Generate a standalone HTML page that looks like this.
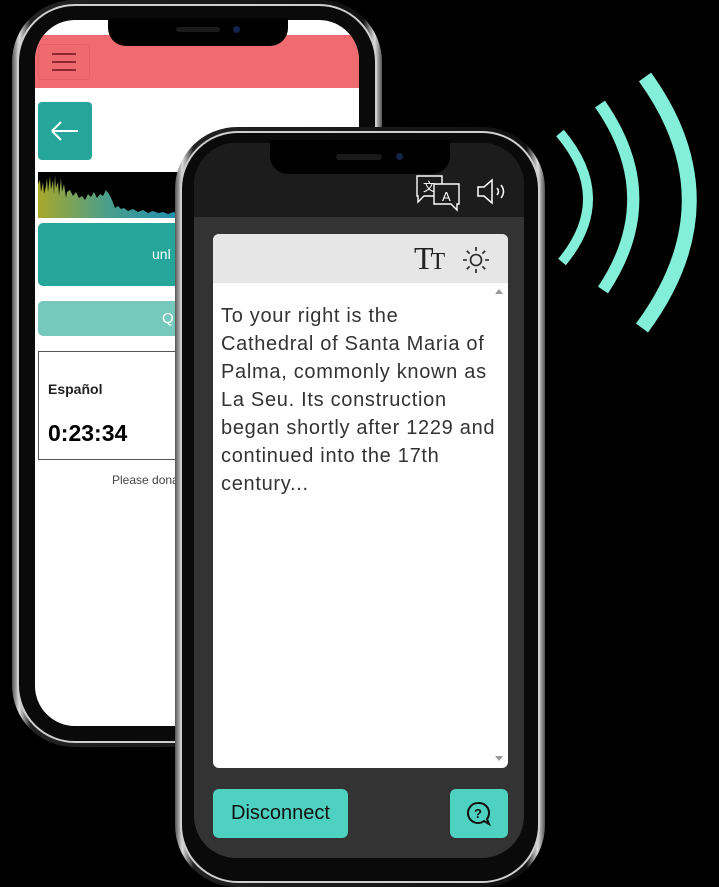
<!DOCTYPE html>
<html><head><meta charset="utf-8"><style>
*{margin:0;padding:0;box-sizing:border-box}
body{width:719px;height:875px;background:#000;position:relative;overflow:hidden;font-family:"Liberation Sans",sans-serif}
.abs{position:absolute}
.frame{position:absolute;border-radius:62px;background:linear-gradient(90deg,#555,#ddd 2%,#222 5%,#111 95%,#ddd 98%,#555);}
.ring{position:absolute;border-radius:58px;background:#0a0a0a;border:2px solid #cfcfcf}
</style></head><body>

<!-- back phone -->
<div class="frame" style="left:12px;top:0;width:370px;height:747px"></div>
<div class="ring" style="left:17px;top:4px;width:360px;height:739px"></div>
<div class="abs" style="left:35px;top:20px;width:324px;height:706px;background:#fff;border-radius:40px;overflow:hidden">
  <div class="abs" style="left:0;top:15px;width:324px;height:53px;background:#ef6b70"></div>
  <div class="abs" style="left:3px;top:24px;width:52px;height:36px;border:1px solid #e06064;border-radius:4px;background:#ee6a6e"></div>
  <div class="abs" style="left:17px;top:33px;width:24px;height:2px;background:#8a2a2e"></div>
  <div class="abs" style="left:17px;top:41px;width:24px;height:2px;background:#8a2a2e"></div>
  <div class="abs" style="left:17px;top:49px;width:24px;height:2px;background:#8a2a2e"></div>
  <div class="abs" style="left:3px;top:82px;width:54px;height:58px;background:#26a69a;border-radius:4px"></div>
  <svg class="abs" style="left:15px;top:100px" width="30" height="22"><path d="M2 11H28M2 11L11 2M2 11L11 20" stroke="#fff" stroke-width="2" fill="none"/></svg>
  <svg class="abs" style="left:3px;top:152px" width="140" height="46">
    <defs><linearGradient id="wg" x1="0" x2="1"><stop offset="0" stop-color="#a8a82a"/><stop offset=".5" stop-color="#4a9e8c"/><stop offset="1" stop-color="#1e8fb0"/></linearGradient></defs>
    <rect width="140" height="46" fill="#000"/>
    <path d="M0 46V12L2 8L3 20L5 10L6 22L8 14L9 6L10 20L12 4L13 18L15 8L16 22L17 3L18 16L20 10L21 24L23 6L24 20L26 12L28 26L29 20L32 18L35 24L38 20L41 26L44 24L47 28L50 22L53 25L56 20L59 26L62 22L65 24L68 18L71 22L74 28L77 36L80 34L83 37L86 36L90 39L95 37L100 40L105 38L110 41L115 39L120 41L125 40L130 42L135 40L140 42V46Z" fill="url(#wg)"/>
  </svg>
  <div class="abs" style="left:3px;top:203px;width:321px;height:63px;background:#26a69a;border-radius:5px;color:#fff;font-size:14px;line-height:63px;padding-left:114px">unl</div>
  <div class="abs" style="left:3px;top:281px;width:321px;height:35px;background:#76c8bd;border-radius:5px;color:#fff;font-size:15px;line-height:35px;padding-left:124px">Q</div>
  <div class="abs" style="left:3px;top:331px;width:321px;height:109px;border:1px solid #555"></div>
  <div class="abs" style="left:13px;top:361px;font-size:14px;font-weight:bold;color:#222">Español</div>
  <div class="abs" style="left:13px;top:400px;font-size:23px;font-weight:bold;color:#000">0:23:34</div>
  <div class="abs" style="left:77px;top:453px;font-size:12px;color:#444">Please donate</div>
</div>
<div class="abs" style="left:108px;top:18px;width:180px;height:28px;background:#000;border-radius:0 0 18px 18px"></div>
<div class="abs" style="left:176px;top:27px;width:44px;height:5px;background:#1a1a1a;border-radius:3px"></div>
<div class="abs" style="left:233px;top:26px;width:7px;height:7px;background:#13234a;border-radius:50%"></div>

<!-- waves -->
<svg class="abs" style="left:0;top:0" width="719" height="875">
<g fill="none" stroke="#83efd8" stroke-linecap="butt">
<path d="M560 133Q615 198 562 262" stroke-width="10"/>
<path d="M600 104Q665 197 603 290" stroke-width="12"/>
<path d="M645 77Q735 202 642 328" stroke-width="15"/>
</g></svg>

<!-- front phone -->
<div class="frame" style="left:175px;top:127px;width:370px;height:760px"></div>
<div class="ring" style="left:180px;top:131px;width:360px;height:752px"></div>
<div class="abs" style="left:194px;top:143px;width:330px;height:715px;background:#333;border-radius:42px;overflow:hidden">
  <div class="abs" style="left:0;top:0;width:330px;height:74px;background:#1c1c1c"></div>
</div>
<div class="abs" style="left:270px;top:140px;width:180px;height:34px;background:#000;border-radius:0 0 18px 18px"></div>
<div class="abs" style="left:336px;top:154px;width:46px;height:6px;background:#1a1a1a;border-radius:3px"></div>
<div class="abs" style="left:396px;top:153px;width:7px;height:7px;background:#13234a;border-radius:50%"></div>
<!-- top icons -->
<svg class="abs" style="left:415px;top:174px" width="46" height="38" fill="none" stroke="#fff" stroke-width="1.4">
<path d="M2 2H27V22H9L3 28V22H2Z"/>
<path d="M19 10H44V30H42V36L36 30H19Z" fill="#1c1c1c"/>
<text x="8" y="17" fill="#fff" stroke="none" font-size="12" font-family="Noto Sans CJK SC,sans-serif">文</text>
<text x="27" y="27" fill="#fff" stroke="none" font-size="13" font-family="Liberation Sans,sans-serif">A</text>
</svg>
<svg class="abs" style="left:476px;top:178px" width="32" height="28" fill="none" stroke="#fff" stroke-width="1.5">
<path d="M2 9H8L16 2V25L8 18H2Z"/><path d="M21 10Q24 13.5 21 17"/><path d="M25 7Q30 13.5 25 20"/>
</svg>
<!-- card -->
<div class="abs" style="left:213px;top:234px;width:295px;height:534px;background:#fff;border-radius:6px;overflow:hidden">
  <div class="abs" style="left:0;top:0;width:295px;height:49px;background:#e6e6e6"></div>
  <div class="abs" style="left:201px;top:6px;font-family:'Liberation Serif',serif;font-size:32px;color:#222">T<span style="font-size:24px;margin-left:-3px">T</span></div>
  <svg class="abs" style="left:248px;top:11px" width="30" height="30" stroke="#222" stroke-width="1.6" fill="none">
  <circle cx="15" cy="15" r="5.5"/><path d="M15 2V6M15 24V28M2 15H6M24 15H28M5.8 5.8L8.6 8.6M21.4 21.4L24.2 24.2M5.8 24.2L8.6 21.4M21.4 8.6L24.2 5.8"/></svg>
  <div class="abs" style="left:282px;top:55px;width:0;height:0;border-left:4px solid transparent;border-right:4px solid transparent;border-bottom:5px solid #999"></div>
  <div class="abs" style="left:282px;top:522px;width:0;height:0;border-left:4px solid transparent;border-right:4px solid transparent;border-top:5px solid #999"></div>
  <div class="abs" style="left:8px;top:68px;width:290px;font-size:20px;line-height:28px;color:#333;letter-spacing:.7px;white-space:nowrap">To your right is the<br>Cathedral of Santa Maria of<br>Palma, commonly known as<br>La Seu. Its construction<br>began shortly after 1229 and<br>continued into the 17th<br>century...</div>
</div>
<div class="abs" style="left:213px;top:789px;width:135px;height:49px;background:#4fd1c1;border-radius:6px;font-size:20px;line-height:49px;text-align:center;color:#111">Disconnect</div>
<div class="abs" style="left:450px;top:789px;width:58px;height:49px;background:#4fd1c1;border-radius:6px"></div>
<svg class="abs" style="left:465px;top:800px" width="28" height="28" fill="none" stroke="#111" stroke-width="2">
<path d="M13 3A10 10 0 1 0 19 21L24 24L22 19A10 10 0 0 0 13 3Z"/>
<text x="9" y="18" fill="#111" stroke="none" font-size="13" font-weight="bold" font-family="Liberation Sans,sans-serif">?</text>
</svg>
</body></html>
